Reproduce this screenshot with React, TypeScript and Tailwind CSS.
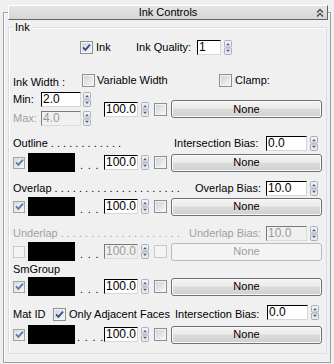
import React from 'react';

const TEXT = "font-['Liberation_Sans',Arial,sans-serif] text-[11px] leading-[13px]";

const Check: React.FC<{ checked?: boolean; disabled?: boolean; flat?: boolean }> = ({ checked, disabled, flat }) => {
  const size = flat ? 'w-[12px] h-[12px]' : 'w-[13px] h-[13px]';
  const border = disabled ? 'border-[#c8c8c8]' : flat ? 'border-[#a4a4a4]' : 'border-[#8e8f8f]';
  const fill = disabled
    ? 'bg-[#f4f4f4]'
    : flat
      ? 'bg-[linear-gradient(135deg,#dcdcdc,#f6f6f6)]'
      : 'bg-[linear-gradient(135deg,#cdd1d7,#f8f8f8)] shadow-[inset_0_0_0_1px_#f4f4f4]';
  return (
    <span className={`flex shrink-0 items-center justify-center border ${size} ${border} ${fill}`}>
      {checked && (
        <svg width="9" height="9" viewBox="0 0 9 9" className="block">
          <path d="M1 4.4 L3.4 6.9 L8 1.6" fill="none" stroke={flat ? '#5a76ad' : '#2f4a8c'} strokeWidth="1.7" />
        </svg>
      )}
    </span>
  );
};

const Spinner: React.FC<{ className?: string }> = ({ className = '' }) => (
  <svg width="8" height="15" viewBox="0 0 8 15" className={`block shrink-0 ${className}`}>
    <rect x="0.5" y="0.5" width="7" height="6.5" rx="1" fill="#eef0f3" stroke="#a7b0bd" />
    <rect x="0.5" y="8" width="7" height="6.5" rx="1" fill="#e6e9ee" stroke="#a7b0bd" />
    <path d="M2 5.2h4L4 3z" fill="#4b5d80" />
    <path d="M2 9.8h4L4 12z" fill="#4b5d80" />
  </svg>
);

const NumInput: React.FC<{ value: string; w: string; disabled?: boolean }> = ({ value, w, disabled }) => (
  <div
    className={`flex h-[15px] shrink-0 items-center border pl-[1px] font-['Liberation_Sans',Arial,sans-serif] text-[12px] leading-[13px] ${w} ${
      disabled
        ? 'border-t-[#7a7a7a] border-l-[#7a7a7a] border-r-[#dcdcdc] border-b-[#dcdcdc] bg-[#f0f0f0] text-[#9a9a9a]'
        : 'border-t-black border-l-black border-r-[#d6d6d6] border-b-[#d6d6d6] bg-white text-black'
    }`}
  >
    {value}
  </div>
);

const NoneButton: React.FC<{ disabled?: boolean }> = ({ disabled }) => (
  <div
    className={`ml-[4px] flex h-[18px] w-[151px] shrink-0 items-center justify-center rounded-[3px] border ${
      disabled
        ? 'border-[#b8bcbf] bg-[#f4f4f4] text-[#9c9c9c]'
        : 'border-[#707070] bg-[linear-gradient(#f3f3f3,#ebebeb_45%,#dcdcdc_50%,#cfcfcf)] text-black shadow-[inset_0_0_0_1px_#fbfbfb]'
    }`}
  >
    None
  </div>
);

const ValueGroup: React.FC<{ disabled?: boolean }> = ({ disabled }) => (
  <div className="flex items-center">
    <NumInput value="100.0" w="w-[34px]" disabled={disabled} />
    <Spinner className="ml-[3px]" />
    <span className="ml-[5px]">
      <Check disabled={disabled} />
    </span>
    <NoneButton disabled={disabled} />
  </div>
);

const ColorRow: React.FC<{ checked?: boolean; disabled?: boolean; four?: boolean }> = ({ checked, disabled, four }) => (
  <div className="flex h-[19px] items-center">
    <Check flat checked={checked} disabled={disabled} />
    <div className="ml-[3px] h-[19px] w-[47px] shrink-0 bg-black" />
    <div className={`w-[29px] shrink-0 self-end whitespace-nowrap tracking-[0.8px] ${four ? 'pl-[2px]' : 'pl-[5px]'}`}>
      {four ? '. . . .' : '. . .'}
    </div>
    <ValueGroup disabled={disabled} />
  </div>
);

const BiasRow: React.FC<{ label: string; dots: string; leftW: string; bias: string; biasW: string; value: string; disabled?: boolean }> = ({
  label,
  dots,
  leftW,
  bias,
  biasW,
  value,
  disabled,
}) => (
  <div className={`flex h-[15px] items-center ${disabled ? 'text-[#a0a0a0]' : ''}`}>
    <div className={`shrink-0 whitespace-nowrap ${leftW}`}>
      {label}
      <span className="ml-[3px]">{dots}</span>
    </div>
    <div className={`shrink-0 whitespace-nowrap ${biasW}`}>{bias}</div>
    <NumInput value={value} w="w-[41px]" disabled={disabled} />
    <Spinner className="ml-[3px]" />
  </div>
);

export default function App() {
  return (
    <div className={`h-[364px] w-[334px] overflow-hidden bg-[#f0f0f0] pl-[3px] pt-[12px] text-black ${TEXT}`}>
      <div className="h-[351px] w-[328px] border border-[#a0a0a0] shadow-[inset_1px_1px_0_#fff]">
        {/* rollout title */}
        <div className="relative -mt-[8px] ml-[4px] flex h-[15px] w-[320px] items-center justify-center border border-b-[#646464] border-l-white border-r-[#646464] border-t-white bg-[linear-gradient(#e4e4e4,#d6d6d6)]">
          <span>Ink Controls</span>
          <svg width="8" height="10" viewBox="0 0 8 10" className="absolute right-[3px] top-[2px]">
            <path d="M1 4.5 L4 1.5 L7 4.5" fill="none" stroke="#4a4a4a" strokeWidth="1.4" />
            <path d="M1 8.5 L4 5.5 L7 8.5" fill="none" stroke="#4a4a4a" strokeWidth="1.4" />
          </svg>
        </div>

        {/* Ink group */}
        <div className="relative ml-[4px] mt-[7px] h-[327px] w-[319px] border border-[#d5dfe5] shadow-[inset_1px_1px_0_#fff]">
          <span className="absolute -top-[7px] left-[4px] bg-[#f0f0f0] px-[2px]">Ink</span>
          <div className="flex flex-col pl-[4px] pt-[12px]">
            <div className="flex h-[15px] items-center">
              <div className="w-[67px] shrink-0" />
              <Check checked />
              <span className="ml-[3px] w-[40px] shrink-0">Ink</span>
              <span className="w-[61px] shrink-0 whitespace-nowrap">Ink Quality:</span>
              <NumInput value="1" w="w-[24px]" />
              <Spinner className="ml-[3px]" />
            </div>

            <div className="mt-[18px] flex h-[14px] items-center">
              <span className="mt-[4px] w-[69px] shrink-0 whitespace-nowrap">Ink Width :</span>
              <Check />
              <span className="ml-[2px] w-[122px] shrink-0 whitespace-nowrap">Variable Width</span>
              <Check />
              <span className="ml-[3px]">Clamp:</span>
            </div>

            <div className="mt-[5px] flex">
              <div className="flex w-[91px] shrink-0 flex-col">
                <div className="flex h-[15px] items-center">
                  <span className="w-[28px] shrink-0">Min:</span>
                  <NumInput value="2.0" w="w-[40px]" />
                  <Spinner className="ml-[2px]" />
                </div>
                <div className="mt-[4px] flex h-[15px] items-center">
                  <span className="w-[28px] shrink-0 text-[#a0a0a0]">Max:</span>
                  <NumInput value="4.0" w="w-[40px]" disabled />
                  <Spinner className="ml-[2px]" />
                </div>
              </div>
              <div className="mt-[8px]">
                <ValueGroup />
              </div>
            </div>

            <div className="mt-[10px]">
              <BiasRow
                label="Outline"
                dots=". . . . . . . . . . . ."
                leftW="w-[161px]"
                bias="Intersection Bias:"
                biasW="w-[92px]"
                value="0.0"
              />
            </div>
            <div className="mt-[2px]">
              <ColorRow checked />
            </div>

            <div className="mt-[9px]">
              <BiasRow
                label="Overlap"
                dots=". . . . . . . . . . . . . . . . . . . . ."
                leftW="w-[182px]"
                bias="Overlap Bias:"
                biasW="w-[71px]"
                value="10.0"
              />
            </div>
            <div className="mt-[1px]">
              <ColorRow checked />
            </div>

            <div className="mt-[10px]">
              <BiasRow
                label="Underlap"
                dots=". . . . . . . . . . . . . . . . . . . ."
                leftW="w-[176px]"
                bias="Underlap Bias:"
                biasW="w-[77px]"
                value="10.0"
                disabled
              />
            </div>
            <div className="mt-[1px]">
              <ColorRow disabled />
            </div>

            <div className="mt-[1px] flex h-[15px] items-center">SmGroup</div>
            <ColorRow checked />

            <div className="mt-[9px] flex h-[18px] items-center">
              <span className="w-[40px] shrink-0">Mat ID</span>
              <Check checked />
              <span className="ml-[3px] w-[106px] shrink-0 whitespace-nowrap">Only Adjacent Faces</span>
              <span className="w-[92px] shrink-0 whitespace-nowrap">Intersection Bias:</span>
              <div className="flex self-start">
                <NumInput value="0.0" w="w-[41px]" />
                <Spinner className="ml-[3px]" />
              </div>
            </div>
            <div className="mt-[2px]">
              <ColorRow checked four />
            </div>
          </div>
        </div>
      </div>
    </div>
  );
}
